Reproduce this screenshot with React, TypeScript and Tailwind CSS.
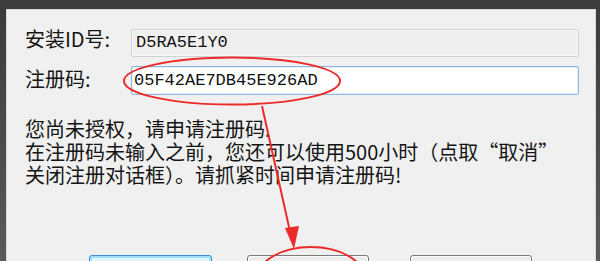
const cjk = "font-['Noto_Sans_CJK_SC','Liberation_Sans',sans-serif]";

const Annotations = () => (
  <svg
    className="pointer-events-none absolute inset-0"
    width={600}
    height={261}
    viewBox="0 0 600 261"
  >
    <ellipse cx={232} cy={81} rx={108} ry={23.5} fill="none" stroke="#ec2a2a" strokeWidth={2} />
    <line x1={262} y1={106} x2={291} y2={236} stroke="#ec2a2a" strokeWidth={2} />
    <polygon points="294,249 285,228 299,226" fill="#ec2a2a" />
    <ellipse cx={311} cy={279} rx={54} ry={32} fill="none" stroke="#ec2a2a" strokeWidth={2} />
  </svg>
);

const Field = ({ label, value, active }: { label: string; value: string; active?: boolean }) => (
  <div className="flex items-start">
    <span className={`w-[106px] text-[20px] leading-[21px] text-[#141414] ${active ? "mt-[2px]" : "-mt-[1px]"}`}>
      {label}
    </span>
    <div
      className={
        active
          ? "flex h-[29px] flex-1 items-center rounded-[2px] border border-[#8db8e2] bg-white pl-[2px] shadow-[inset_0_0_0_1px_#e3eef9]"
          : "flex h-[28px] flex-1 items-center rounded-[2px] border border-[#d2d2d2] bg-[#efefef] pl-[4px] shadow-[inset_0_0_0_1px_#f7f7f7]"
      }
    >
      <span className="font-['Liberation_Mono',monospace] text-[17px] text-[#111]">{value}</span>
    </div>
  </div>
);

const DialogButton = ({ text, primary }: { text: string; primary?: boolean }) => (
  <div
    className={
      primary
        ? "flex h-[28px] w-[123px] items-start justify-center rounded-[3px] border border-[#3d8ed6] bg-[#e4f4fc] pt-[3px] shadow-[inset_0_0_0_2px_#9fe0fa]"
        : "flex h-[28px] w-[122px] items-start justify-center rounded-[3px] border border-[#7a7a7a] bg-[#ececec] pt-[3px] shadow-[inset_0_0_0_1px_#fbfbfb]"
    }
  >
    <span className="text-[18px] leading-[22px] text-[#111]">{text}</span>
  </div>
);

const App = () => {
  return (
    <div className={`relative flex h-[261px] w-[600px] flex-col overflow-hidden bg-gradient-to-b from-[#3b3b3b] to-[#5a5a5a] ${cjk}`}>
      <div className="ml-[6px] mr-[4px] mt-[9px] flex flex-1 flex-col border-l border-r border-t border-[#d8d8d8] bg-[#f0f0f0]">
        <div className="flex flex-col gap-[9px] pl-[18px] pr-[16px] pt-[19px]">
          <Field label="安装ID号:" value="D5RA5E1Y0" />
          <Field label="注册码:" value="05F42AE7DB45E926AD" active />
        </div>
        <p className="mt-[22px] pl-[18px] text-[20px] leading-[23px] text-[#141414]">
          您尚未授权，请申请注册码.
          <br />
          在注册码未输入之前，您还可以使用500小时（点取“取消”
          <br />
          关闭注册对话框）。请抓紧时间申请注册码!
        </p>
        <div className="mt-[69px] flex pl-[82px]">
          <DialogButton text="确定" primary />
          <div className="ml-[35px]">
            <DialogButton text="注册" />
          </div>
          <div className="ml-[41px]">
            <DialogButton text="取消" />
          </div>
        </div>
      </div>
      <Annotations />
    </div>
  );
};

export default App;
